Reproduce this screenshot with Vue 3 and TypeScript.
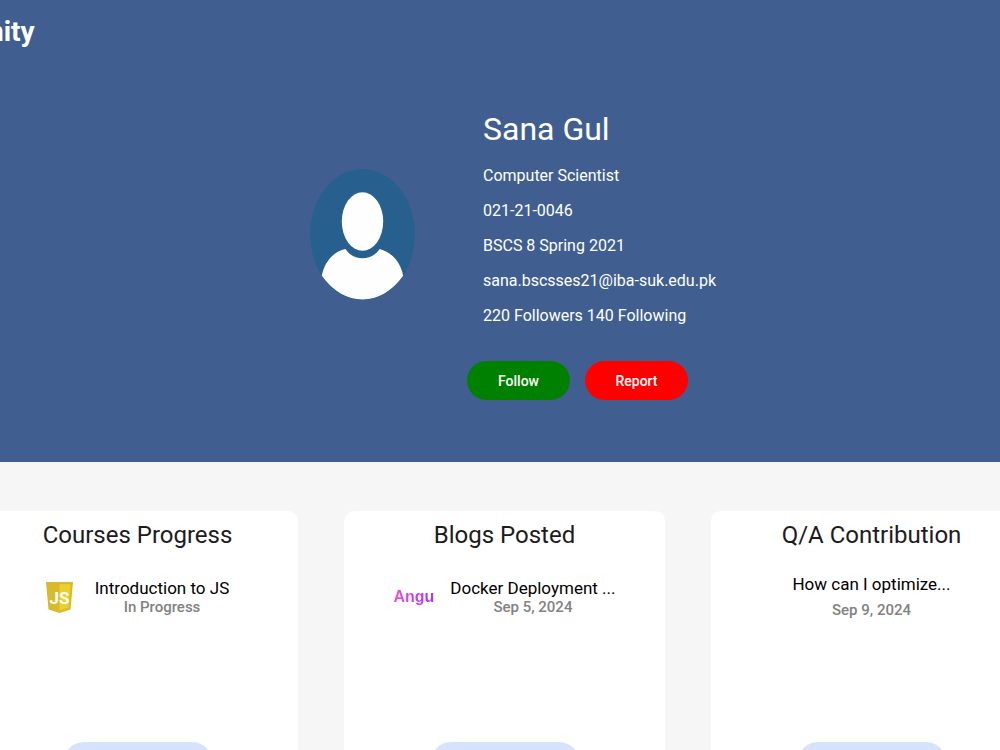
<script setup lang="ts">
import { ref } from 'vue'

interface Entry {
  title: string
  note: string
  icon?: 'js' | 'angular'
}

interface Section {
  heading: string
  entry: Entry
}

const following = ref<boolean>(false)

const details: string[] = [
  'Computer Scientist',
  '021-21-0046',
  'BSCS 8 Spring 2021',
  'sana.bscsses21@iba-suk.edu.pk',
  '220 Followers 140 Following',
]

const sections: Section[] = [
  { heading: 'Courses Progress', entry: { title: 'Introduction to JS', note: 'In Progress', icon: 'js' } },
  { heading: 'Blogs Posted', entry: { title: 'Docker Deployment ...', note: 'Sep 5, 2024', icon: 'angular' } },
  { heading: 'Q/A Contribution', entry: { title: 'How can I optimize...', note: 'Sep 9, 2024' } },
]
</script>

<template>
  <div class="page">
    <header class="hero">
      <div class="brand">nity</div>
      <section class="profile">
        <svg class="avatar" viewBox="0 0 105 131" aria-hidden="true">
          <defs>
            <clipPath id="avatar-clip"><ellipse cx="52.5" cy="65.5" rx="52.5" ry="65.5" /></clipPath>
          </defs>
          <ellipse cx="52.5" cy="65.5" rx="52.5" ry="65.5" fill="#27608f" />
          <g clip-path="url(#avatar-clip)" fill="#fefefe">
            <ellipse cx="52.5" cy="52.5" rx="20.7" ry="29.2" />
            <path d="M11.8 107 C14 94 23 82.500 35.500 80 C40 86.500 46 89.300 52.500 89.300 C59 89.300 65 86.500 69.700 80 C82 83 91 94 93.200 107 C82 122 68 130.500 52.500 130.500 C37 130.500 23 122 11.800 107Z" />
          </g>
        </svg>
        <div class="info">
          <h1 class="name">Sana Gul</h1>
          <p v-for="line in details" :key="line" class="detail">{{ line }}</p>
          <div class="actions">
            <button type="button" class="action follow" :aria-pressed="following" @click="following = !following">Follow</button>
            <button type="button" class="action report">Report</button>
          </div>
        </div>
      </section>
    </header>

    <main class="cards">
      <article v-for="section in sections" :key="section.heading" class="card">
        <h2 class="heading">{{ section.heading }}</h2>
        <div class="entry" :class="{ plain: !section.entry.icon, blog: section.entry.icon === 'angular' }">
          <svg v-if="section.entry.icon === 'js'" class="js-logo" viewBox="0 0 27 31" aria-hidden="true">
            <path d="M0 0H27L24.500 27.500L13.500 31L2.500 27.500Z" fill="#d9ba2c" />
            <path d="M13.500 2.300H24.500L22.400 25.800L13.500 28.500Z" fill="#ecd02f" />
            <text x="13.500" y="22" text-anchor="middle" class="js-letters">JS</text>
          </svg>
          <span v-else-if="section.entry.icon === 'angular'" class="angular">Angu</span>
          <div class="words">
            <div class="title">{{ section.entry.title }}</div>
            <div class="note">{{ section.entry.note }}</div>
          </div>
        </div>
        <button type="button" class="more" :aria-label="section.heading"></button>
      </article>
    </main>
  </div>
</template>

<style>
html,
body {
  margin: 0;
  background: #f6f6f6;
}
</style>

<style scoped>
.page {
  height: 100vh;
  overflow: hidden;
  font-family: Roboto, "Liberation Sans", sans-serif;
  background: #f6f6f6;
}
.hero {
  box-sizing: border-box;
  padding-bottom: 62px;
  background: #405f90;
  color: #fff;
}
.brand {
  height: 64px;
  margin-left: -12px;
  font-size: 28px;
  font-weight: 700;
  line-height: 64px;
}
.profile {
  display: flex;
  align-items: flex-start;
  gap: 52px;
  padding: 45px 0 0 31%;
}
.avatar {
  flex: none;
  width: 105px;
  height: 131px;
  margin-top: 60px;
}
.name {
  margin: 0 0 9px;
  padding-left: 16px;
  font-size: 32px;
  font-weight: 400;
  line-height: 40px;
}
.detail {
  margin: 0;
  padding-left: 16px;
  font-size: 16px;
  line-height: 35px;
}
.actions {
  display: flex;
  gap: 15px;
  margin-top: 28px;
}
.action {
  width: 103px;
  height: 39px;
  padding: 0;
  border: 0;
  border-radius: 20px;
  color: #fff;
  font: 500 14px/20px Roboto, "Liberation Sans", sans-serif;
}
.follow {
  background: #008000;
}
.report {
  background: #f00;
}
.cards {
  display: grid;
  grid-template-columns: repeat(3, minmax(0, 1fr));
  gap: 46px;
  margin: 49px -32px 0 -23px;
}
.card {
  display: flex;
  flex-direction: column;
  align-items: center;
  min-height: 280px;
  border-radius: 10px;
  background: #fff;
}
.heading {
  margin: 8px 0 0;
  color: #1d1b20;
  font-size: 24px;
  font-weight: 400;
  line-height: 32px;
}
.entry {
  display: flex;
  align-items: center;
  gap: 22px;
  height: 92px;
}
.blog {
  gap: 16px;
}
.js-logo {
  width: 27px;
  height: 31px;
}
.js-letters {
  fill: #fff;
  font: 700 17px Roboto, "Liberation Sans", sans-serif;
}
.angular {
  background: linear-gradient(90deg, #f04bdc, #a03cf0);
  background-clip: text;
  color: transparent;
  font: 700 16px/20px "Liberation Sans", sans-serif;
}
.words {
  text-align: center;
}
.title {
  color: #000;
  font-size: 17px;
  line-height: 20px;
}
.note {
  color: #828282;
  font-size: 15px;
  font-weight: 500;
  line-height: 18px;
}
.plain .title {
  line-height: 26px;
}
.plain .note {
  line-height: 26px;
}
.more {
  width: 148px;
  height: 40px;
  margin-top: 99px;
  border: 0;
  border-radius: 20px;
  background: #d7e2ff;
}
</style>
